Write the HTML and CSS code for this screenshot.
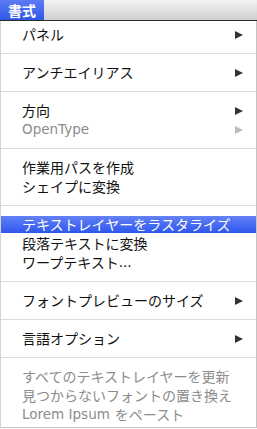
FILE: index.html
```html
<!DOCTYPE html>
<html lang="ja">
<head>
<meta charset="utf-8">
<link rel="stylesheet" href="styles.css">
</head>
<body>
<div class="bar"><span class="tab">書式</span></div>
<div class="menu">
  <div class="group first">
    <div class="row">パネル<span class="arrow"></span></div>
  </div>
  <div class="group">
    <div class="row">アンチエイリアス<span class="arrow"></span></div>
  </div>
  <div class="group">
    <div class="row">方向<span class="arrow"></span></div>
    <div class="row off"><span class="latin">OpenType</span><span class="arrow"></span></div>
  </div>
  <div class="group">
    <div class="row">作業用パスを作成</div>
    <div class="row">シェイプに変換</div>
  </div>
  <div class="group">
    <div class="row hl">テキストレイヤーをラスタライズ</div>
    <div class="row">段落テキストに変換</div>
    <div class="row">ワープテキスト<span class="latin">...</span></div>
  </div>
  <div class="group">
    <div class="row">フォントプレビューのサイズ<span class="arrow"></span></div>
  </div>
  <div class="group">
    <div class="row">言語オプション<span class="arrow"></span></div>
  </div>
  <div class="group last">
    <div class="row off">すべてのテキストレイヤーを更新</div>
    <div class="row off">見つからないフォントの置き換え</div>
    <div class="row off"><span class="latin">Lorem Ipsum</span><span class="gap"></span>をペースト</div>
  </div>
</div>
</body>
</html>
```
FILE: styles.css
```css
html, body {
  margin: 0;
  padding: 0;
  background: #ffffff;
}
body {
  width: 257px;
  height: 429px;
  overflow: hidden;
  font-family: "Noto Sans CJK JP", sans-serif;
  font-size: 14px;
  color: #111111;
}
.bar {
  height: 20px;
  border-bottom: 1px solid #2a2a2a;
  background: linear-gradient(#f2f2f2, #cfcfcf);
  display: flex;
}
.tab {
  width: 44px;
  height: 20px;
  background: linear-gradient(#5c7af4, #2f58ea);
  color: #ffffff;
  font-weight: bold;
  font-size: 14px;
  line-height: 20px;
  padding-left: 8px;
  box-sizing: border-box;
}
.menu {
  border-left: 1px solid #d4d4d4;
  border-right: 1px solid #c4c4c4;
  border-bottom: 1px solid #c4c4c4;
  display: flex;
  flex-direction: column;
}
.group {
  padding: 9px 0;
  border-top: 1px solid #dcdcdc;
  display: flex;
  flex-direction: column;
}
.group.first {
  padding-top: 4px;
  border-top: none;
}
.group.last {
  padding-bottom: 3px;
}
.row {
  height: 19px;
  line-height: 19px;
  padding-left: 21px;
  padding-right: 13px;
  display: flex;
  align-items: center;
  white-space: nowrap;
}
.row.off {
  color: #8c8c8c;
}
.row.hl {
  color: #ffffff;
  background: linear-gradient(#6482f5, #2d56ec) 0 1px / 100% 17px no-repeat;
}
.latin {
  font-family: "DejaVu Sans", sans-serif;
  font-size: 13.5px;
}
.gap {
  width: 5px;
}
.arrow {
  margin-left: auto;
  width: 0;
  height: 0;
  border-top: 4.5px solid transparent;
  border-bottom: 4.5px solid transparent;
  border-left: 8px solid #333333;
}
.row.off .arrow {
  border-left-color: #bdbdbd;
}
```
